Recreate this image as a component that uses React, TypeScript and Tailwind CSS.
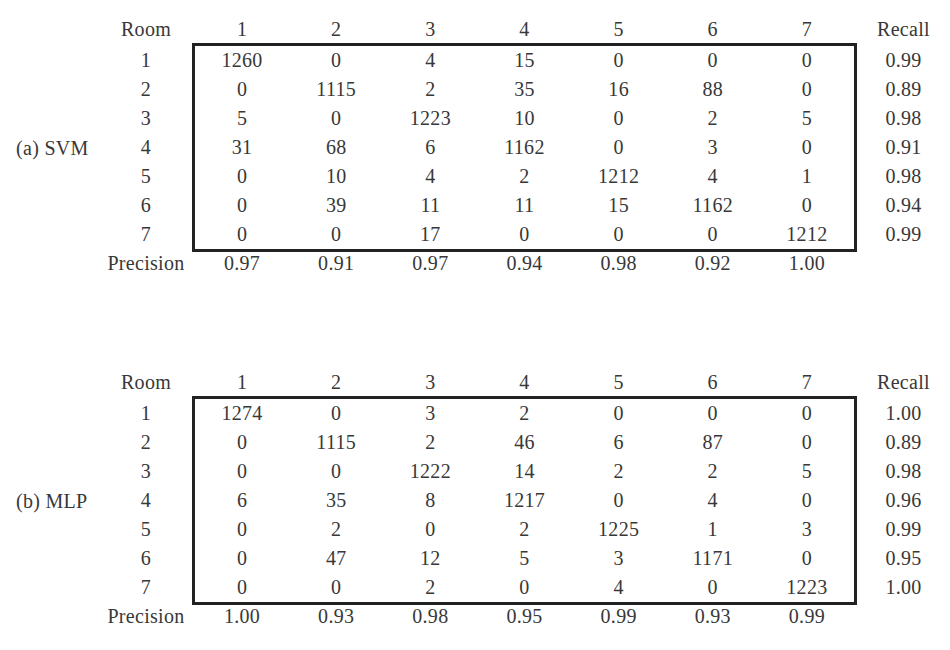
import React from 'react';

interface MatrixProps {
  label: string;
  rows: number[][];
  recall: string[];
  precision: string[];
}

const ROOMS = ['1', '2', '3', '4', '5', '6', '7'];

function Matrix({ label, rows, recall, precision }: MatrixProps) {
  return (
    <div className="flex flex-col">
      {/* Header row */}
      <div className="flex h-[28px] items-center">
        <div className="w-[100px]" />
        <div className="w-[92px] text-center">Room</div>
        <div className="grid w-[665px] grid-cols-7 px-[3px]">
          {ROOMS.map((r) => (
            <div key={r} className="text-center">{r}</div>
          ))}
        </div>
        <div className="w-[93px] text-center">Recall</div>
      </div>

      {/* Body */}
      <div className="flex">
        <div className="flex w-[100px] items-center pl-4">{label}</div>
        <div className="flex w-[92px] flex-col py-[3px]">
          {ROOMS.map((r) => (
            <div key={r} className="h-[29px] text-center leading-[29px]">{r}</div>
          ))}
        </div>
        <div className="w-[665px] border-[3px] border-[#222]">
          {rows.map((row, i) => (
            <div key={i} className="grid h-[29px] grid-cols-7 leading-[29px]">
              {row.map((v, j) => (
                <div key={j} className="text-center">{v}</div>
              ))}
            </div>
          ))}
        </div>
        <div className="flex w-[93px] flex-col py-[3px]">
          {recall.map((v, i) => (
            <div key={i} className="h-[29px] text-center leading-[29px]">{v}</div>
          ))}
        </div>
      </div>

      {/* Precision row */}
      <div className="flex h-[22px] items-center">
        <div className="w-[100px]" />
        <div className="w-[92px] text-center">Precision</div>
        <div className="grid w-[665px] grid-cols-7 px-[3px]">
          {precision.map((p, i) => (
            <div key={i} className="text-center">{p}</div>
          ))}
        </div>
      </div>
    </div>
  );
}

const svm = [
  [1260, 0, 4, 15, 0, 0, 0],
  [0, 1115, 2, 35, 16, 88, 0],
  [5, 0, 1223, 10, 0, 2, 5],
  [31, 68, 6, 1162, 0, 3, 0],
  [0, 10, 4, 2, 1212, 4, 1],
  [0, 39, 11, 11, 15, 1162, 0],
  [0, 0, 17, 0, 0, 0, 1212],
];

const mlp = [
  [1274, 0, 3, 2, 0, 0, 0],
  [0, 1115, 2, 46, 6, 87, 0],
  [0, 0, 1222, 14, 2, 2, 5],
  [6, 35, 8, 1217, 0, 4, 0],
  [0, 2, 0, 2, 1225, 1, 3],
  [0, 47, 12, 5, 3, 1171, 0],
  [0, 0, 2, 0, 4, 0, 1223],
];

export default function App() {
  return (
    <div className="min-h-screen w-[950px] bg-white pt-[15px] font-['Liberation_Serif','Times_New_Roman',serif] text-[20px] tracking-[0.3px] text-[#383838]">
      <Matrix
        label="(a) SVM"
        rows={svm}
        recall={['0.99', '0.89', '0.98', '0.91', '0.98', '0.94', '0.99']}
        precision={['0.97', '0.91', '0.97', '0.94', '0.98', '0.92', '1.00']}
      />
      <div className="mt-[94px]">
        <Matrix
          label="(b) MLP"
          rows={mlp}
          recall={['1.00', '0.89', '0.98', '0.96', '0.99', '0.95', '1.00']}
          precision={['1.00', '0.93', '0.98', '0.95', '0.99', '0.93', '0.99']}
        />
      </div>
    </div>
  );
}
